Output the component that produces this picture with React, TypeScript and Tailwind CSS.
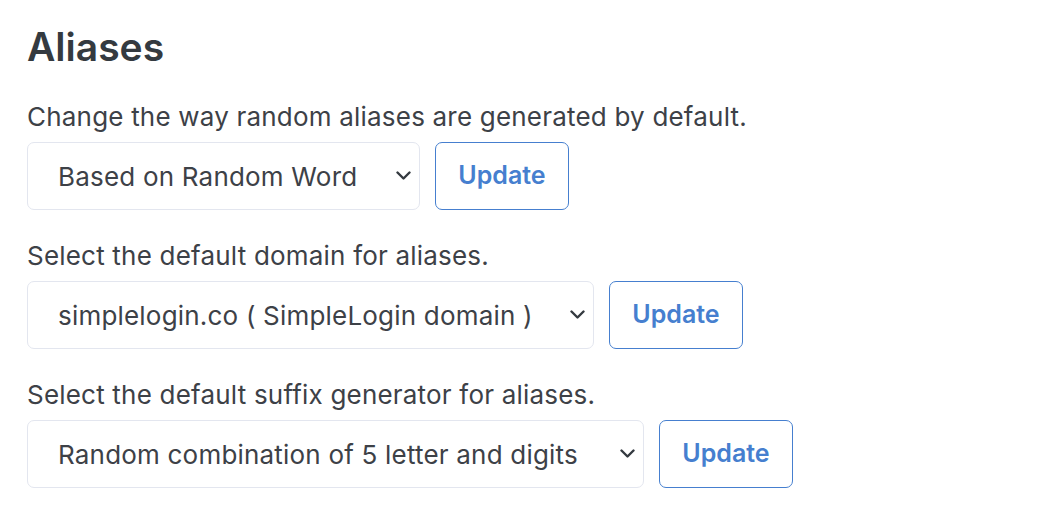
import { useState } from "react";

type Row = {
    label: string;
    options: string[];
    width: string;
};

const rows: Row[] = [
    {
        label: "Change the way random aliases are generated by default.",
        options: ["Based on Random Word", "Based on UUID"],
        width: "w-[393px]",
    },
    {
        label: "Select the default domain for aliases.",
        options: ["simplelogin.co ( SimpleLogin domain )"],
        width: "w-[567px]",
    },
    {
        label: "Select the default suffix generator for aliases.",
        options: ["Random combination of 5 letter and digits", "Random word from dictionary"],
        width: "w-[617px]",
    },
];

function SettingRow({ row }: { row: Row }) {
    const [value, setValue] = useState(row.options[0]);

    return (
        <div className="mb-[28px]">
            <p className="mb-[7px] text-[26px] leading-[36px] tracking-[0.2px] text-[#3d4147]">{row.label}</p>
            <div className="flex gap-[15px]">
                <div className={`relative ${row.width}`}>
                    <select
                        value={value}
                        onChange={(e) => setValue(e.target.value)}
                        className="h-[68px] w-full appearance-none rounded-[7px] border border-[#e3e6ef] bg-white pl-[30px] pr-[50px] text-[26px] tracking-[0.2px] text-[#3d4147] outline-none"
                    >
                        {row.options.map((o) => (
                            <option key={o}>{o}</option>
                        ))}
                    </select>
                    <svg
                        className="pointer-events-none absolute right-[9px] top-[29px]"
                        width="15"
                        height="10"
                        viewBox="0 0 15 10"
                        fill="none"
                    >
                        <path d="M1.5 1.5L7.5 7.5L13.5 1.5" stroke="#343a40" strokeWidth="2.4" strokeLinecap="round" strokeLinejoin="round" />
                    </svg>
                </div>
                <button
                    type="button"
                    className="h-[68px] w-[134px] rounded-[7px] border border-[#467fcf] bg-white text-[25px] font-semibold text-[#467fcf] hover:bg-[#467fcf] hover:text-white"
                >
                    Update
                </button>
            </div>
        </div>
    );
}

export default function App() {
    return (
        <div className="min-h-screen bg-white pl-[27px] pt-[23px] font-['Inter','Noto_Sans',sans-serif]">
            <h3 className="mb-[28px] text-[39px] font-semibold leading-[48px] text-[#343a40]">Aliases</h3>
            {rows.map((row) => (
                <SettingRow key={row.label} row={row} />
            ))}
        </div>
    );
}
